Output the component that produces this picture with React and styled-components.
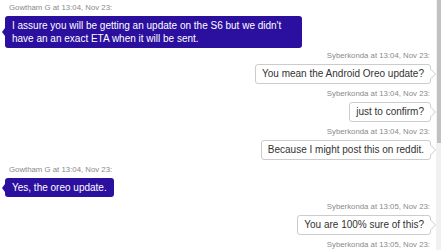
import React from "react";
import styled, { createGlobalStyle } from "styled-components";

const GlobalStyle = createGlobalStyle`
  html, body {
    margin: 0;
    padding: 0;
    background: #ffffff;
  }
  body {
    font-family: "Liberation Sans", Arial, sans-serif;
  }
`;

const Frame = styled.div`
  display: flex;
  height: 100vh;
  overflow: hidden;
`;

const ChatWindow = styled.div`
  flex: 1;
  min-width: 0;
  overflow: hidden;
  background: #ffffff;
  padding: 3px 0 14px 5px;
  box-sizing: border-box;
`;

const ScrollTrack = styled.div`
  width: 5px;
  flex-shrink: 0;
  background: #f1f1f1;
  padding-left: 1px;
  box-sizing: border-box;
`;

const ScrollThumb = styled.div`
  height: 143px;
  background: #c1c1c1;
`;

const Message = styled.div`
  display: flex;
  flex-direction: column;
  align-items: ${({ mine }) => (mine ? "flex-end" : "flex-start")};
  margin-bottom: ${({ gap }) => gap}px;
`;

const Meta = styled.div`
  font-size: 7.8px;
  line-height: 10px;
  color: #8a8a8a;
  margin: 0 ${({ mine }) => (mine ? "6px" : "0")} 3px ${({ mine }) => (mine ? "0" : "4px")};
`;

const Bubble = styled.div`
  position: relative;
  box-sizing: border-box;
  max-width: 297px;
  font-size: 10px;
  line-height: ${({ mine }) => (mine ? "14px" : "13px")};
  border-radius: 3px;
  padding: ${({ mine }) => (mine ? "2px 6px" : "3px 7px")};
  background: ${({ mine }) => (mine ? "#ffffff" : "#2b0f9e")};
  color: ${({ mine }) => (mine ? "#333333" : "#ffffff")};
  border: ${({ mine }) => (mine ? "1px solid #cccccc" : "none")};
  margin-right: ${({ mine }) => (mine ? "5px" : "0")};

  &::before {
    content: "";
    position: absolute;
    top: 50%;
    transform: translateY(-50%);
    border-style: solid;
    ${({ mine }) =>
      mine
        ? `right: -6px;
           border-width: 6px 0 6px 6px;
           border-color: transparent transparent transparent #cccccc;`
        : `left: -3px;
           border-width: 4px 3px 4px 0;
           border-color: transparent #2b0f9e transparent transparent;`}
  }

  &::after {
    content: "";
    position: absolute;
    top: 50%;
    transform: translateY(-50%);
    border-style: solid;
    ${({ mine }) =>
      mine
        ? `right: -5px;
           border-width: 5px 0 5px 5px;
           border-color: transparent transparent transparent #ffffff;`
        : `display: none;`}
  }
`;

// last entry is only a header: its bubble falls below the visible area
const messages = [
  { mine: false, name: "Gowtham G", time: "13:04, Nov 23", text: "I assure you will be getting an update on the S6 but we didn't have an an exact ETA when it will be sent.", gap: 3 },
  { mine: true, name: "Syberkonda", time: "13:04, Nov 23", text: "You mean the Android Oreo update?", gap: 5 },
  { mine: true, name: "Syberkonda", time: "13:04, Nov 23", text: "just to confirm?", gap: 5 },
  { mine: true, name: "Syberkonda", time: "13:04, Nov 23", text: "Because I might post this on reddit.", gap: 5 },
  { mine: false, name: "Gowtham G", time: "13:04, Nov 23", text: "Yes, the oreo update.", gap: 5 },
  { mine: true, name: "Syberkonda", time: "13:05, Nov 23", text: "You are 100% sure of this?", gap: 5 },
  { mine: true, name: "Syberkonda", time: "13:05, Nov 23", text: null, gap: 0 },
];

const App = () => {
  return (
    <>
      <GlobalStyle />
      <Frame>
        <ChatWindow>
          {messages.map((msg, index) => (
            <Message key={index} mine={msg.mine} gap={msg.gap}>
              <Meta mine={msg.mine}>
                {msg.name} at {msg.time}:
              </Meta>
              {msg.text && <Bubble mine={msg.mine}>{msg.text}</Bubble>}
            </Message>
          ))}
        </ChatWindow>
        <ScrollTrack>
          <ScrollThumb />
        </ScrollTrack>
      </Frame>
    </>
  );
};

export default App;
